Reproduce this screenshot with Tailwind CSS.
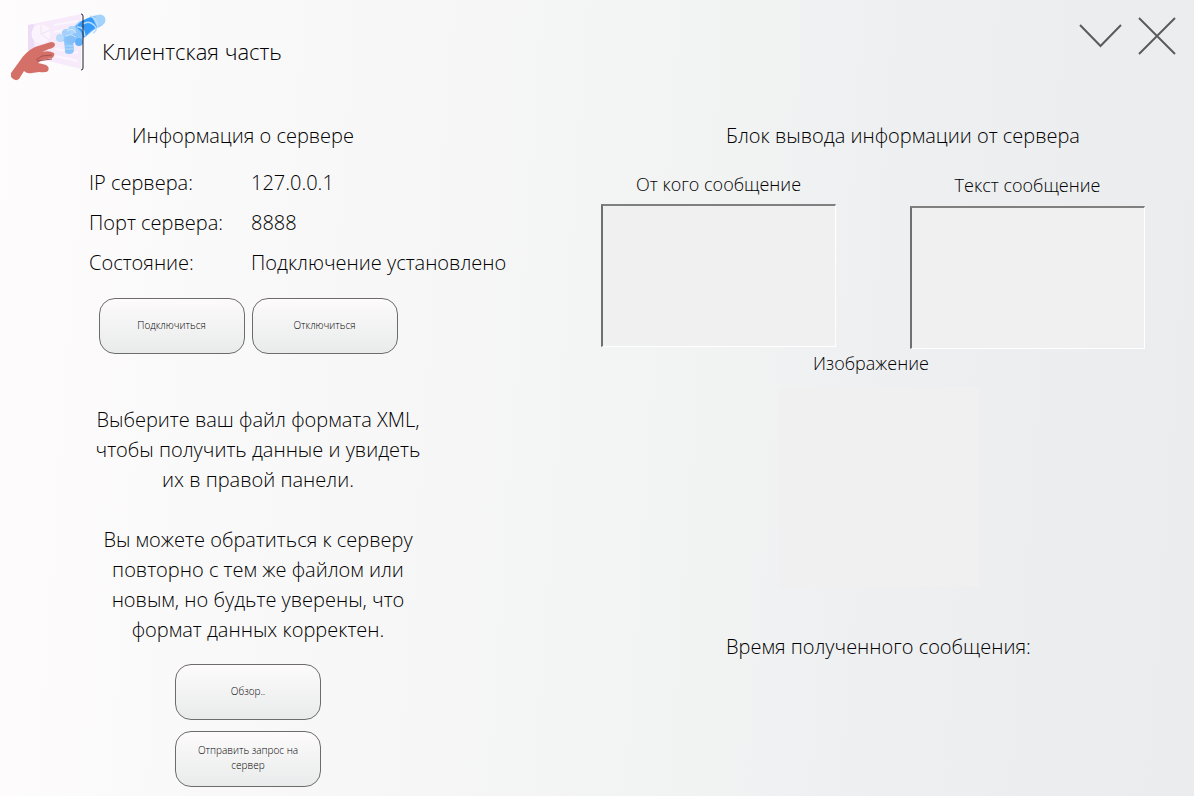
<!DOCTYPE html>
<html lang="ru">
<head>
<meta charset="utf-8">
<meta name="viewport" content="width=device-width, initial-scale=1">
<title>Клиентская часть</title>
<script src="https://cdn.jsdelivr.net/npm/@tailwindcss/browser@4"></script>
</head>
<body class="min-h-screen bg-linear-[94deg,#fefcfd_0%,#f7f7f7_33%,#f1f2f2_62%,#eeeff1_74%,#eaecee_100%] font-['Open_Sans','Noto_Sans',sans-serif] text-[20px] leading-[30px] font-light text-black">
<header class="flex h-[90px] items-start justify-between pr-[18px] pl-2">
  <div class="flex items-start">
    <svg class="mt-2 h-20 w-[100px]" viewBox="8 8 100 80" fill="none" aria-hidden="true">
      <path d="M28 25 81 14V69L28 56Z" fill="#f7ebfb"/>
      <path d="M28 25 34 24V49L28 54Z" fill="#eddcf5"/>
      <circle cx="41" cy="34" r="9.500" fill="#fbf4fd"/>
      <path d="M41 25V34L49 40M41 34 51 30" stroke="#f0e3f7"/>
      <path d="M54 25 78 21M54 32 70 29M55 49 78 53M55 56 78 61" stroke="#fbf5fd" stroke-width="2"/>
      <path d="M62 36 70 30 79 22 92 16 100 15 103 25 94 30 84 38 78 46Q75 42 76 36L73 40 74 50Q74 54 69 54Q64 54 65 50L64 41 59 42Z" fill="#8cc5fb"/>
      <path d="M76 27Q82 19 92 17L97 27Q91 30 86 36L83 37Q82 31 76 27Z" fill="#369af9"/>
      <circle cx="100" cy="20" r="5.500" fill="#a3d3fa"/>
      <path d="M83 24Q89 20 94 25T93 33M77 27Q84 26 85 36M90 16Q97 18 98 28" stroke="#b9defd" stroke-width="1.500"/>
      <circle cx="72" cy="30" r="4" fill="#acd5fa"/>
      <circle cx="66" cy="33" r="4" fill="#a2cffb"/>
      <circle cx="71" cy="39" r="5" fill="#85bff8"/>
      <circle cx="60" cy="38" r="4" fill="#b9dafb"/>
      <path d="M67 31Q73 27 76 33M66 36Q72 33 75 37" stroke="#d5eafe"/>
      <circle cx="79" cy="42" r="4" fill="#62b0fa"/>
      <path d="M65 46H74M65 49H74" stroke="#b5d8fa"/>
      <path d="M81 14Q83 14 83 16V68Q83 70 81 70" stroke="#231f29"/>
      <path d="M11 73 19 62Q25 52 35 47L51 42Q55 42 55 45Q54 48 49 49L42 52Q49 50 54 53Q55 56 52 58L42 60 38 63Q43 64 46 65Q50 67 48 71Q46 73 39 72L32 73Q27 74 24 71L19 79Q15 82 11 77Z" fill="#d57068"/>
      <path d="M36 60 42 56 52 55M37 61 52 59" stroke="#a65053"/>
    </svg>
    <h1 class="mt-9 -ml-[6px] text-[22px]">Клиентская часть</h1>
  </div>
  <div class="flex pt-[17px]">
    <button type="button" aria-label="Свернуть" class="mr-4">
      <svg class="h-[38px] w-[43px]" viewBox="0 0 43 38" fill="none" stroke="#5a5b5d" stroke-width="2"><path d="M1 8 21.500 29 42 8"/></svg>
    </button>
    <button type="button" aria-label="Закрыть">
      <svg class="h-[38px] w-[38px]" viewBox="0 0 38 38" fill="none" stroke="#5a5b5d" stroke-width="2"><path d="M1 1 37 37M37 1 1 37"/></svg>
    </button>
  </div>
</header>
<main class="grid grid-cols-2 pt-[31px]">
  <section class="pl-[88px]">
    <h2 class="w-[310px] text-center">Информация о сервере</h2>
    <dl class="mt-3 grid grid-cols-[162px_1fr] pl-px leading-10 whitespace-nowrap">
      <dt>IP сервера:</dt><dd>127.0.0.1</dd>
      <dt>Порт сервера:</dt><dd>8888</dd>
      <dt>Состояние:</dt><dd>Подключение установлено</dd>
    </dl>
    <div class="mt-[15px] flex w-80 justify-center gap-[7px]">
      <button type="button" class="h-14 w-[146px] rounded-2xl border border-[#6c6c6e] bg-linear-to-b from-[#fdfbfc] to-[#e9ebeb] px-4 pb-0.5 text-[10px] leading-[15px]">Подключиться</button>
      <button type="button" class="h-14 w-[146px] rounded-2xl border border-[#6c6c6e] bg-linear-to-b from-[#fdfbfc] to-[#e9ebeb] px-4 pb-0.5 text-[10px] leading-[15px]">Отключиться</button>
    </div>
    <div class="mt-[51px] w-[340px] text-center whitespace-nowrap">
      <p>Выберите ваш файл формата XML,<br>чтобы получить данные и увидеть<br>их в правой панели.</p>
      <p class="mt-[30px]">Вы можете обратиться к серверу<br>повторно с тем же файлом или<br>новым, но будьте уверены, что<br>формат данных корректен.</p>
    </div>
    <div class="mt-[19px] mb-2 flex w-80 flex-col items-center gap-[11px]">
      <button type="button" class="h-14 w-[146px] rounded-2xl border border-[#6c6c6e] bg-linear-to-b from-[#fdfbfc] to-[#e9ebeb] px-4 pb-0.5 text-[10px] leading-[15px]">Обзор..</button>
      <button type="button" class="h-14 w-[146px] rounded-2xl border border-[#6c6c6e] bg-linear-to-b from-[#fdfbfc] to-[#e9ebeb] px-4 pb-0.5 text-[10px] leading-[15px]">Отправить запрос на сервер</button>
    </div>
  </section>
  <section class="pl-1">
    <h2 class="pl-[125px] whitespace-nowrap">Блок вывода информации от сервера</h2>
    <div class="mt-[19px] flex items-start gap-[74px] text-[18px] leading-7">
      <div class="flex w-[235px] flex-col text-center">
        <label for="sender">От кого сообщение</label>
        <textarea id="sender" readonly class="mt-1.5 h-[143px] resize-none border-t-2 border-r border-b border-l-2 border-t-[#808080] border-r-white border-b-white border-l-[#707070] bg-[#f0f0f0] outline-none"></textarea>
      </div>
      <div class="flex w-[235px] flex-col pt-px text-center">
        <label for="message">Текст сообщение</label>
        <textarea id="message" readonly class="mt-[7px] h-[143px] resize-none border-t-2 border-r border-b border-l-2 border-t-[#808080] border-r-white border-b-white border-l-[#707070] bg-[#f0f0f0] outline-none"></textarea>
      </div>
    </div>
    <figure class="w-[540px]">
      <figcaption class="text-center text-[18px] leading-7">Изображение</figcaption>
      <div class="mt-2.5 ml-[178px] size-[200px] bg-[#f0f0f0]"></div>
    </figure>
    <p class="mt-[45px] pl-[125px]">Время полученного сообщения:</p>
  </section>
</main>
</body>
</html>
